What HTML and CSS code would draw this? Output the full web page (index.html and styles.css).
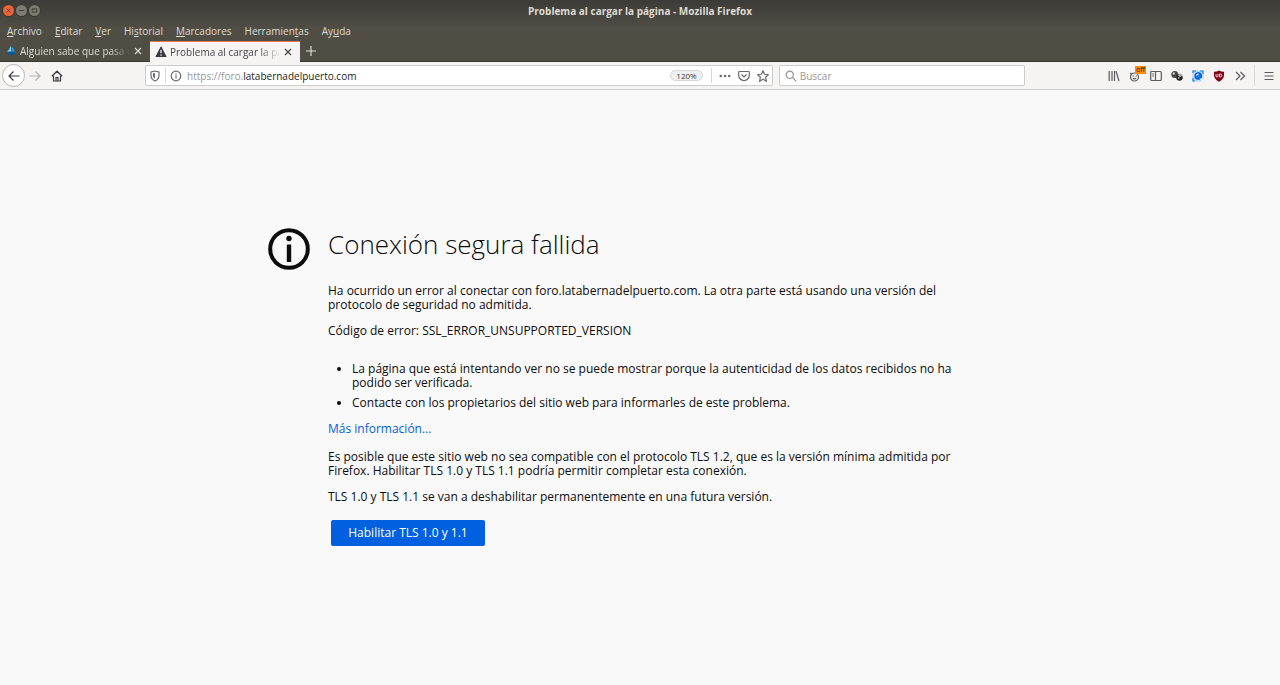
FILE: index.html
```html
<!DOCTYPE html>
<html lang="es">
<head>
<meta charset="utf-8">
<title>Problema al cargar la página - Mozilla Firefox</title>
<link rel="stylesheet" href="styles.css">
</head>
<body>
<header class="chrome">
  <div class="titlebar">
    <div class="window-controls">
      <button class="window-button close" aria-label="Cerrar"><svg viewBox="0 0 12 12"><path d="M4 4l4 4M8 4l-4 4"/></svg></button>
      <button class="window-button" aria-label="Minimizar"><svg viewBox="0 0 12 12"><path d="M3 6h6"/></svg></button>
      <button class="window-button" aria-label="Maximizar"><svg viewBox="0 0 12 12"><path d="M3.5 4.2h5v3.6h-5z"/></svg></button>
    </div>
    <div class="window-title">Problema al cargar la página - Mozilla Firefox</div>
  </div>
  <nav class="menubar">
    <button><u>A</u>rchivo</button>
    <button><u>E</u>ditar</button>
    <button><u>V</u>er</button>
    <button>Hi<u>s</u>torial</button>
    <button><u>M</u>arcadores</button>
    <button>Herramien<u>t</u>as</button>
    <button>Ay<u>u</u>da</button>
  </nav>
  <div class="tabs">
    <div class="tab">
      <svg class="tab-icon" viewBox="0 0 12 12"><path d="M1.5 6.2A5 5 0 0 0 11 6.200z" fill="#1673b8"/><path d="M1.800 7.500Q6 6 10.500 7.500A5 5 0 0 1 1.800 7.500z" fill="#0b5897"/><path d="M6 .5v6H2.200Q5 4 6 .5z" fill="#7fd0f5"/><path d="M6.500 1.500Q9.500 3.500 9.500 6.500h-3z" fill="#2499dc"/></svg>
      <span class="tab-label">Alguien sabe que pasa con</span>
      <button class="tab-close" aria-label="Cerrar pestaña"><svg viewBox="0 0 10 10"><path d="M2 2l6 6M8 2L2 8"/></svg></button>
    </div>
    <div class="tab active">
      <svg class="tab-icon" viewBox="0 0 12 12"><path d="M6 1.200L10.800 10.500H1.200z" fill="#38383d" stroke="#38383d" stroke-width="1.200" stroke-linejoin="round"/><path d="M6 3.800v3.500M6 8.600v1.200" stroke="#fff" stroke-width="1.200"/></svg>
      <span class="tab-label">Problema al cargar la página</span>
      <button class="tab-close" aria-label="Cerrar pestaña"><svg viewBox="0 0 10 10"><path d="M2 2l6 6M8 2L2 8"/></svg></button>
    </div>
    <button class="new-tab" aria-label="Nueva pestaña"><svg viewBox="0 0 10 10"><path d="M5 0v10M0 5h10"/></svg></button>
  </div>
  <div class="toolbar">
    <div class="navigation">
      <button class="back" aria-label="Atrás"><svg class="icon" viewBox="0 0 12 12"><path d="M11.500 6H1M5.500 1.500L1 6l4.500 4.500"/></svg></button>
      <button class="forward" aria-label="Adelante"><svg class="icon" viewBox="0 0 12 12"><path d="M.5 6H11M6.500 1.500L11 6l-4.500 4.500"/></svg></button>
      <button class="home" aria-label="Inicio"><svg class="icon" viewBox="0 0 12 12"><path d="M.8 6.300L6 1.200l5.200 5.100M2.500 5.800v5.200h7V5.800M5 11V7.500h2V11"/></svg></button>
    </div>
    <div class="urlbar">
      <svg class="icon shield" viewBox="0 0 12 12"><path d="M6 1l4 1v3.500Q9.800 9.500 6 11 2.200 9.500 2 5.500V2z"/><path d="M6 3v5.800Q4 7.800 3.900 5.500v-2z" fill="currentColor" stroke="none"/></svg>
      <span class="divider"></span>
      <svg class="icon info" viewBox="0 0 12 12"><circle cx="6" cy="6" r="4.800"/><path d="M6 5.300v3.200M6 3.300v1.100" stroke-width="1.200"/></svg>
      <div class="url" role="textbox"><span>https://foro.</span>latabernadelpuerto.com</div>
      <button class="zoom">120%</button>
      <span class="divider"></span>
      <button class="action" aria-label="Acciones de página"><svg class="icon" viewBox="0 0 12 12"><g fill="currentColor" stroke="none"><circle cx="1.800" cy="6" r="1.300"/><circle cx="6" cy="6" r="1.300"/><circle cx="10.200" cy="6" r="1.300"/></g></svg></button>
      <button class="action" aria-label="Pocket"><svg class="icon" viewBox="0 0 12 12"><path d="M1.500 1.500h9q.8 0 .8.800v3A5.300 5.300 0 0 1 .7 5.300v-3q0-.8.800-.8zM3.500 4.500L6 7l2.500-2.500"/></svg></button>
      <button class="action" aria-label="Añadir a marcadores"><svg class="icon" viewBox="0 0 12 12"><path d="M6 .8l1.600 3.500 3.800.4-2.800 2.600.8 3.900L6 9.200l-3.400 2 .8-3.900L.6 4.700l3.800-.4z"/></svg></button>
    </div>
    <label class="search">
      <svg class="icon" viewBox="0 0 12 12"><circle cx="4.800" cy="4.800" r="3.600"/><path d="M7.500 7.500l3.800 3.800"/></svg>
      <input type="text" placeholder="Buscar" aria-label="Buscar">
    </label>
    <div class="extensions">
      <button aria-label="Catálogo"><svg class="icon" viewBox="0 0 12 12"><path d="M1.200 1v10M4 1v10M6.500 1v10M8 1l3 10"/></svg></button>
      <button class="badged" aria-label="Extensión desactivada"><svg class="icon" viewBox="0 0 12 12"><circle cx="5.500" cy="7" r="4"/><path d="M3.500 6h1.500M6.500 6H8M4 8.300q1.500 1.300 3 0M1 3l1.800 1.500"/></svg><span class="badge">off</span></button>
      <button aria-label="Barra lateral"><svg class="icon" viewBox="0 0 12 12"><rect x=".7" y="1.500" width="10.600" height="9" rx="1"/><path d="M5.500 1.500v9M2.200 4h1.700M2.200 6h1.700"/></svg></button>
      <button aria-label="Cookies"><svg class="icon" viewBox="0 0 12 12"><g stroke="none"><circle cx="3.800" cy="4.500" r="3.500" fill="#444"/><circle cx="2.800" cy="3.500" r="1.200" fill="#ccc"/><circle cx="8.500" cy="7.500" r="3.200" fill="#222"/><circle cx="9.200" cy="5.200" r="1.800" fill="#aaa"/><circle cx="7.800" cy="8" r=".8" fill="#ddd"/></g></svg></button>
      <button aria-label="Buscar imagen"><svg class="icon" viewBox="0 0 12 12"><rect x=".5" y=".5" width="11" height="11" rx="1" fill="#b7d8ff" stroke="none"/><path d="M1 3V1h3M8 1h3v3M1 8v3h2" stroke="#167cf3"/><circle cx="6.200" cy="6" r="3.200" fill="#1676ee" stroke="#0756cb"/><path d="M4.500 5.500Q5 4 6.700 4M8.500 8.500l2.500 2.500" stroke="#fff"/></svg></button>
      <button aria-label="uBlock"><svg class="icon" viewBox="0 0 12 12"><path d="M6 .4Q8 1.800 11 1.800v4Q10.500 9.500 6 11.700 1.500 9.500 1 5.800v-4Q4 1.800 6 .4z" fill="#830015" stroke="none"/><path d="M3 4v2q0 1 1 1t1-1V4M6.500 4v3h.8q1.500 0 1.500-1.500T7.300 4z" stroke="#fff" stroke-width=".8"/></svg></button>
      <button aria-label="Más herramientas"><svg class="icon" viewBox="0 0 12 12"><path d="M2 2l4 4-4 4M6.500 2l4 4-4 4"/></svg></button>
      <span class="divider"></span>
      <button aria-label="Abrir menú"><svg class="icon" viewBox="0 0 12 12"><path d="M1.500 2.500h9M1.500 6h9M1.500 9.500h9"/></svg></button>
    </div>
  </div>
</header>
<main class="page">
  <section class="error">
    <svg class="error-icon" viewBox="0 0 42 42"><circle cx="21" cy="21" r="18.800" fill="none" stroke="#0c0c0d" stroke-width="4"/><circle cx="21" cy="10.500" r="2.700" fill="#0c0c0d"/><path d="M21 16.500V34" stroke="#0c0c0d" stroke-width="4.400"/></svg>
    <div class="error-content">
      <h1>Conexión segura fallida</h1>
      <p>Ha ocurrido un error al conectar con foro.latabernadelpuerto.com. La otra parte está usando una versión del<br>protocolo de seguridad no admitida.</p>
      <p>Código de error: SSL_ERROR_UNSUPPORTED_VERSION</p>
      <ul>
        <li>La página que está intentando ver no se puede mostrar porque la autenticidad de los datos recibidos no ha<br>podido ser verificada.</li>
        <li>Contacte con los propietarios del sitio web para informarles de este problema.</li>
      </ul>
      <p class="more"><a href="#">Más información…</a></p>
      <p>Es posible que este sitio web no sea compatible con el protocolo TLS 1.2, que es la versión mínima admitida por<br>Firefox. Habilitar TLS 1.0 y TLS 1.1 podría permitir completar esta conexión.</p>
      <p>TLS 1.0 y TLS 1.1 se van a deshabilitar permanentemente en una futura versión.</p>
      <button class="primary">Habilitar TLS 1.0 y 1.1</button>
    </div>
  </section>
</main>
</body>
</html>
```
FILE: styles.css
```css
* { box-sizing: border-box; }

body {
  margin: 0;
  min-height: 100vh;
  display: flex;
  flex-direction: column;
  background: #f9f9fa;
  color: #0c0c0d;
  font: 12px/14px "Open Sans", "Noto Sans", sans-serif;
}

button {
  margin: 0;
  padding: 0;
  border: 0;
  background: none;
  color: inherit;
  font: inherit;
}

svg { display: block; }

.icon {
  width: 12px;
  height: 12px;
  flex: none;
  fill: none;
  stroke: currentColor;
  stroke-width: 1.2;
}

.chrome {
  background: linear-gradient(#3c3b37, #504d45 28px);
  color: #dfdbd2;
  font-size: 10px;
}

.titlebar {
  display: grid;
  grid-template-columns: 1fr auto 1fr;
  align-items: center;
  height: 21px;
  padding: 0 3px;
}

.window-controls { display: flex; gap: 2px; }

.window-button {
  width: 11px;
  height: 11px;
  border-radius: 50%;
  background: #7d7a72;
  box-shadow: 0 0 0 1px #3a3934;
}

.window-button svg { fill: none; stroke: #3c3b37; stroke-width: 1; }
.window-button.close { background: #ee6238; }

.window-title { font-weight: 700; }

.menubar {
  display: flex;
  gap: 13px;
  height: 20px;
  padding: 3px 7px;
}

.menubar u { text-underline-offset: 1px; }

.tabs {
  display: flex;
  height: 21px;
  border-bottom: 1px solid #38362f;
}

.tab {
  display: flex;
  align-items: center;
  gap: 3px;
  width: 150px;
  padding: 0 7px 0 5px;
}

.active {
  height: 21px;
  border-top: 1px solid #ee7651;
  background: #f5f4f3;
  color: #45454a;
}

.tab-icon { width: 12px; height: 12px; flex: none; }

.tab-label {
  flex: 1;
  overflow: hidden;
  white-space: nowrap;
  mask-image: linear-gradient(90deg, #000 82%, transparent);
}

.tab-close svg {
  width: 10px;
  height: 10px;
  fill: none;
  stroke: currentColor;
  stroke-width: 1.2;
}

.new-tab { padding: 0 6px; }

.new-tab svg {
  width: 10px;
  height: 10px;
  stroke: currentColor;
  stroke-width: 1.2;
}

.toolbar {
  display: flex;
  align-items: center;
  height: 28px;
  padding: 0 5px 0 2px;
  border-bottom: 1px solid #ccc;
  background: #f5f4f3;
  color: #5a5a5f;
}

.navigation {
  display: flex;
  align-items: center;
  flex: none;
  width: 143px;
  color: #3c3c40;
}

.back {
  display: grid;
  place-items: center;
  width: 23px;
  height: 23px;
  border: 1px solid #b5b5b5;
  border-radius: 50%;
  background: #fff;
}

.forward { margin-left: 4px; color: #b1b1b3; }
.home { margin-left: 10px; }

.urlbar,
.search {
  display: flex;
  align-items: center;
  height: 21px;
  border: 1px solid #ccc;
  border-radius: 2px;
  background: #fff;
}

.urlbar {
  flex: 640 1 0;
  padding: 0 3px;
  color: #6b6b70;
}

.divider {
  width: 1px;
  height: 15px;
  margin: 0 4px;
  background: #d7d7db;
}

.url { flex: 1; margin-left: 5px; color: #1c1c1f; white-space: nowrap; }
.url span { color: #97979b; }

.zoom {
  padding: 0 5px;
  margin-right: 4px;
  border: 1px solid #d5d5d5;
  border-radius: 6px;
  background: #f0f0f1;
  color: #38383d;
  font-size: 8px;
  line-height: 9px;
}

.action { margin-left: 3px; }
.action + .action { margin-left: 7px; }

.search {
  flex: 242 1 0;
  gap: 3px;
  margin-left: 6px;
  padding: 0 5px;
  color: #97979b;
}

.search input {
  width: 100%;
  min-width: 0;
  padding: 0;
  border: 0;
  outline: 0;
  background: none;
  color: #38383d;
  font: inherit;
}

.search input::placeholder { color: #97979b; opacity: 1; }

.extensions {
  display: flex;
  align-items: center;
  flex: none;
  gap: 9px;
  margin-left: 83px;
}

.extensions .divider { height: 21px; margin: 0 -1px; }

.badged { position: relative; }

.badge {
  position: absolute;
  top: -4px;
  right: -5px;
  padding: 0 1px;
  background: #ff8c00;
  color: #222;
  font-size: 7px;
  line-height: 8px;
}

.page {
  display: flex;
  flex: 1;
  align-items: center;
  justify-content: center;
  padding-bottom: 2px;
}

.error {
  display: grid;
  grid-template-columns: 60px minmax(0, 684px);
}

.error-icon { width: 42px; height: 42px; }

h1 {
  margin: 0 0 24px;
  font: 300 26px/32px "Open Sans", "Noto Sans", sans-serif;
}

p { margin: 0 0 12px; }

ul { margin: 24px 0 12px; padding-left: 24px; }
li { margin-bottom: 6px; }

a { color: #0060df; text-decoration: none; }
.more { margin-bottom: 14px; }

.primary {
  min-width: 154px;
  height: 26px;
  margin: 4px 3px 0;
  padding: 0 17px;
  border-radius: 2px;
  background: #0060df;
  color: #fff;
}
```
